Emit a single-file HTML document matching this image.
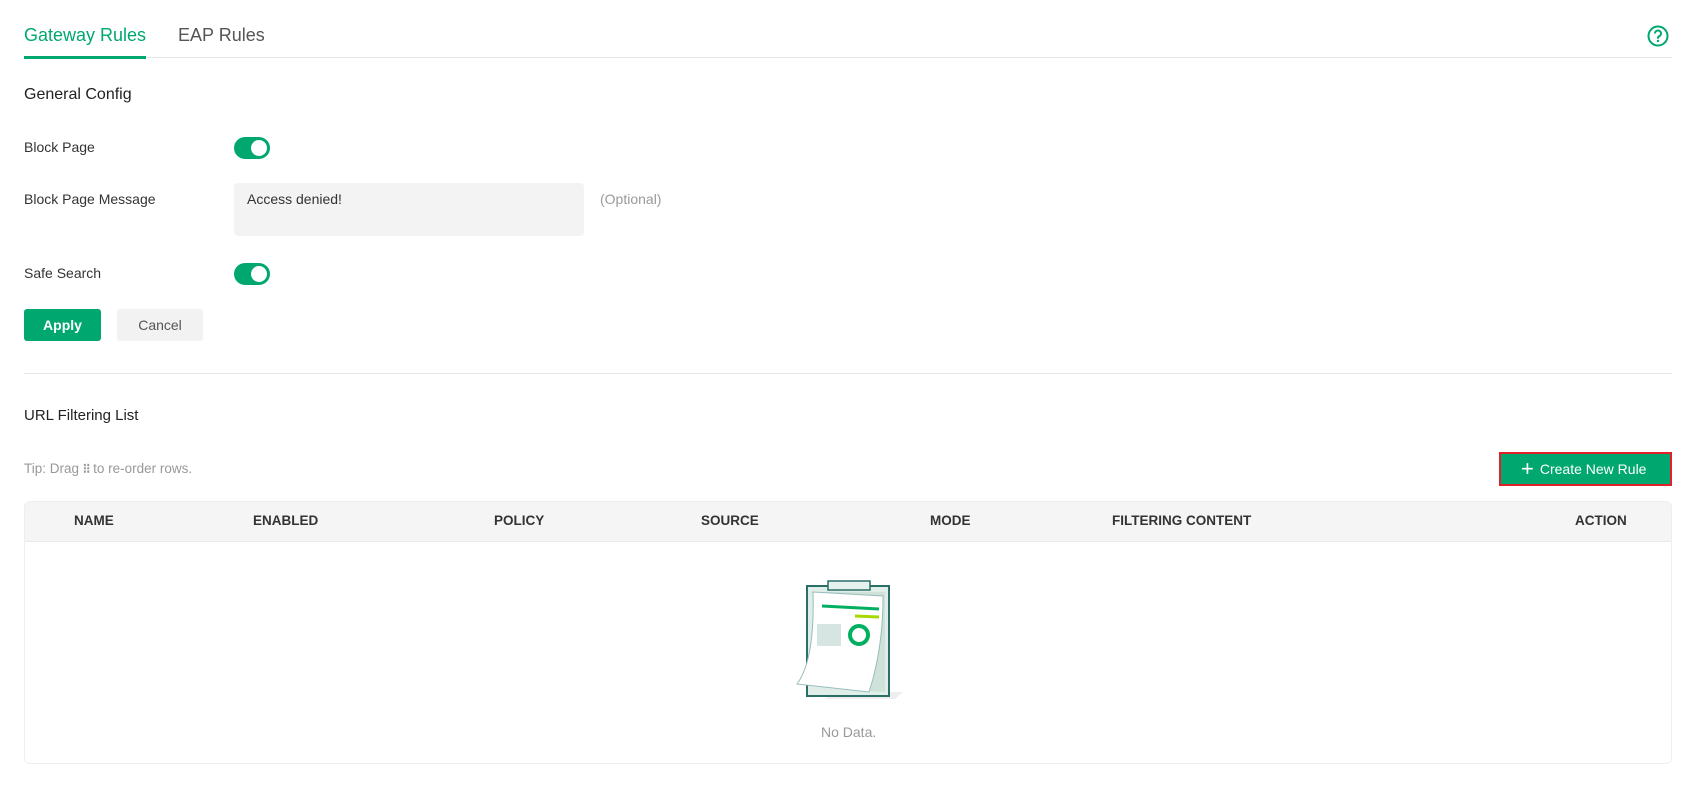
<!DOCTYPE html>
<html><head><meta charset="utf-8"><style>
*{box-sizing:border-box;margin:0;padding:0}
body{width:1696px;height:789px;background:#fff;font-family:"Liberation Sans",sans-serif;color:#333;position:relative;overflow:hidden}
.a{position:absolute;white-space:nowrap}
.tg{position:absolute;width:36px;height:22px;border-radius:11px;background:#00a870}
.tg::after{content:"";position:absolute;right:3px;top:3px;width:16px;height:16px;border-radius:50%;background:#fff}
.th{position:absolute;top:513px;font-size:13.5px;font-weight:bold;color:#333}
</style></head><body>
<div class="a" style="left:24px;top:25px;font-size:18px;color:#00a870">Gateway Rules</div>
<div class="a" style="left:178px;top:25px;font-size:18px;color:#555">EAP Rules</div>
<div class="a" style="left:24px;top:57px;width:1648px;height:1px;background:#e8e8e8"></div>
<div class="a" style="left:24px;top:56px;width:122px;height:3px;background:#00a870"></div>
<svg class="a" style="left:1647px;top:25px" width="22" height="22" viewBox="0 0 22 22"><circle cx="11" cy="11" r="9.5" fill="none" stroke="#00a870" stroke-width="2"/><path d="M8 8.5a3 3 0 1 1 4.2 2.7c-.8.4-1.2.9-1.2 1.8v.6" fill="none" stroke="#00a870" stroke-width="2"/><circle cx="11" cy="16" r="1.2" fill="#00a870"/></svg>
<div class="a" style="left:24px;top:86px;font-size:16px;color:#222">General Config</div>
<div class="a" style="left:24px;top:139px;font-size:14px">Block Page</div>
<div class="tg" style="left:234px;top:137px"></div>
<div class="a" style="left:24px;top:191px;font-size:14px">Block Page Message</div>
<div class="a" style="left:234px;top:183px;width:350px;height:53px;background:#f3f3f3;border-radius:4px"></div>
<div class="a" style="left:247px;top:191px;font-size:14px">Access denied!</div>
<div class="a" style="left:600px;top:191px;font-size:14px;color:#999">(Optional)</div>
<div class="a" style="left:24px;top:265px;font-size:14px">Safe Search</div>
<div class="tg" style="left:234px;top:263px"></div>
<div class="a" style="left:24px;top:309px;width:77px;height:32px;background:#00a870;border-radius:3px;color:#fff;font-size:14px;font-weight:bold;text-align:center;line-height:32px">Apply</div>
<div class="a" style="left:117px;top:309px;width:86px;height:32px;background:#f2f2f2;border-radius:3px;color:#555;font-size:14px;text-align:center;line-height:32px">Cancel</div>
<div class="a" style="left:24px;top:373px;width:1648px;height:1px;background:#e8e8e8"></div>
<div class="a" style="left:24px;top:407px;font-size:15px;color:#222">URL Filtering List</div>
<div class="a" style="left:24px;top:461px;font-size:13.5px;color:#999">Tip: Drag <span style="letter-spacing:-1px;font-weight:bold">⁝⁝</span> to re-order rows.</div>
<div class="a" style="left:1499px;top:452px;width:173px;height:34px;background:#00a870;border:2px solid #e0202a;color:#fff;font-size:14px;line-height:30px;padding-left:20px"><span style="font-size:22px;font-weight:300;vertical-align:-2px;margin-right:6px">+</span>Create New Rule</div>
<div class="a" style="left:24px;top:501px;width:1648px;height:263px;border:1px solid #eee;border-radius:6px;overflow:hidden">
<div style="height:40px;background:#f5f5f5;border-bottom:1px solid #eaeaea"></div></div>
<div class="th" style="left:74px">NAME</div>
<div class="th" style="left:253px">ENABLED</div>
<div class="th" style="left:494px">POLICY</div>
<div class="th" style="left:701px">SOURCE</div>
<div class="th" style="left:930px">MODE</div>
<div class="th" style="left:1112px">FILTERING CONTENT</div>
<div class="th" style="left:1575px">ACTION</div>
<svg class="a" style="left:795px;top:580px" width="112" height="126" viewBox="0 0 112 126">
<path d="M30 119 L100 119 L108 112 L40 112Z" fill="#eee"/>
<rect x="12" y="6" width="82" height="110" fill="#dfeee8" stroke="#2a6e66" stroke-width="2"/>
<rect x="33" y="1" width="42" height="9" fill="#e6f2ee" stroke="#2a6e66" stroke-width="1.5"/>
<path d="M16 12 L90 12 L90 112 L60 110 Q86 70 16 12Z" fill="#cfe2da"/>
<path d="M18 12 L88 16 Q88 70 74 112 L2 104 Q20 80 18 12Z" fill="#fff" stroke="#9bb" stroke-width="1"/>
<line x1="27" y1="26" x2="84" y2="29" stroke="#00b060" stroke-width="3"/>
<line x1="60" y1="36" x2="84" y2="37" stroke="#a6d800" stroke-width="3"/>
<rect x="22" y="44" width="24" height="22" fill="#d6e4e2"/>
<circle cx="64" cy="55" r="9" fill="none" stroke="#00b060" stroke-width="4"/>
</svg>
<div class="a" style="left:821px;top:724px;font-size:14px;color:#999">No Data.</div>
</body></html>
